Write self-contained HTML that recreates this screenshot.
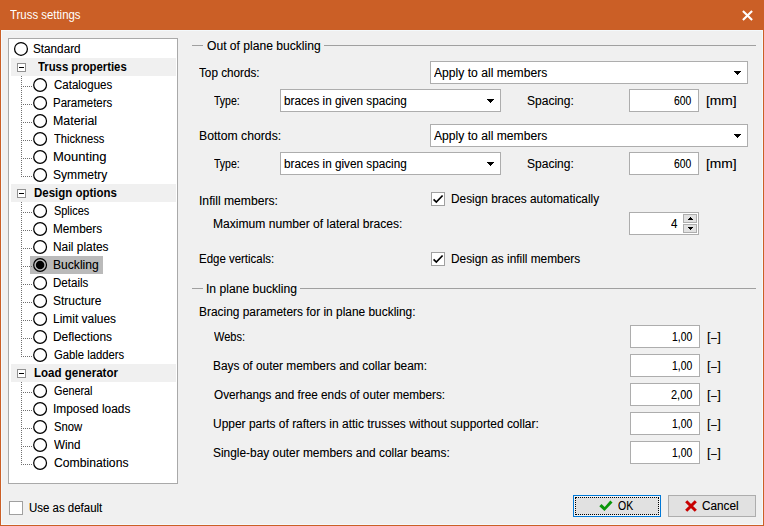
<!DOCTYPE html>
<html><head><meta charset="utf-8"><title>Truss settings</title>
<style>
html,body{margin:0;padding:0;}
body{width:764px;height:526px;overflow:hidden;background:#f0f0f0;font-family:"Liberation Sans",sans-serif;font-size:12px;color:#000;position:relative;}
.abs,.t,.box,.hl{position:absolute;}
.t{text-shadow:0 0 0 rgba(0,0,0,0.3);white-space:nowrap;line-height:16px;height:16px;transform-origin:0 0;}
.b{font-weight:bold;text-shadow:none;}
#title{left:0;top:0;width:764px;height:30px;background:#cb5f26;}
#bl{left:0;top:29px;width:1px;height:497px;background:#cb5f26;}
#br{left:763px;top:29px;width:1px;height:497px;background:#cb5f26;}
#bb{left:0;top:525px;width:764px;height:1px;background:#cb5f26;}
#bt{left:0;top:29px;width:764px;height:1px;background:#cb5f26;}
#inner{left:1px;top:30px;width:760px;height:493px;border:1px solid #f4f9fc;}
#tree{left:8px;top:38px;width:168px;height:444px;background:#fff;border:1px solid #a9a9a9;}
.box{background:#fff;border:1px solid #adadad;box-sizing:border-box;}
.hl{background:#a0a0a0;height:1px;}
svg{position:absolute;overflow:visible;}
</style></head><body>
<div class="abs" id="title"></div><div class="abs" id="bl"></div><div class="abs" id="br"></div><div class="abs" id="bb"></div><div class="abs" id="bt"></div><div class="abs" id="inner"></div>
<svg style="left:742px;top:10px" width="11" height="11" viewBox="0 0 11 11"><path d="M0.9 0.9 L10.1 10.1 M10.1 0.9 L0.9 10.1" stroke="#fff" stroke-width="2.1" fill="none"/></svg>
<div class="abs" id="tree"></div>

<svg style="left:13px;top:40px" width="16" height="16" viewBox="0 0 16 16"><circle cx="8.00" cy="8.90" r="6.4" fill="#fff" stroke="#000" stroke-width="1.25"/></svg>
<div class="abs" style="left:11px;top:58px;width:165px;height:18px;background:#f0f0f0"></div>
<svg style="left:17px;top:63px" width="9" height="9" viewBox="0 0 9 9"><rect x="0.5" y="0.5" width="8" height="8" fill="#fff" stroke="#919191"/><path d="M2 4.5H7" stroke="#000"/></svg>
<div class="abs" style="left:21px;top:76px;width:1px;height:18px;background:repeating-linear-gradient(to bottom,#707070 0 1px,transparent 1px 2px)"></div>
<div class="abs" style="left:22px;top:86px;width:11px;height:1px;background:repeating-linear-gradient(to right,transparent 0 1px,#707070 1px 2px)"></div>
<svg style="left:32px;top:77px" width="16" height="16" viewBox="0 0 16 16"><circle cx="8.10" cy="8.00" r="6.4" fill="#fff" stroke="#000" stroke-width="1.25"/></svg>
<div class="abs" style="left:21px;top:94px;width:1px;height:18px;background:repeating-linear-gradient(to bottom,#707070 0 1px,transparent 1px 2px)"></div>
<div class="abs" style="left:22px;top:104px;width:11px;height:1px;background:repeating-linear-gradient(to right,transparent 0 1px,#707070 1px 2px)"></div>
<svg style="left:32px;top:95px" width="16" height="16" viewBox="0 0 16 16"><circle cx="8.10" cy="8.00" r="6.4" fill="#fff" stroke="#000" stroke-width="1.25"/></svg>
<div class="abs" style="left:21px;top:112px;width:1px;height:18px;background:repeating-linear-gradient(to bottom,#707070 0 1px,transparent 1px 2px)"></div>
<div class="abs" style="left:22px;top:122px;width:11px;height:1px;background:repeating-linear-gradient(to right,transparent 0 1px,#707070 1px 2px)"></div>
<svg style="left:32px;top:113px" width="16" height="16" viewBox="0 0 16 16"><circle cx="8.10" cy="8.00" r="6.4" fill="#fff" stroke="#000" stroke-width="1.25"/></svg>
<div class="abs" style="left:21px;top:130px;width:1px;height:18px;background:repeating-linear-gradient(to bottom,#707070 0 1px,transparent 1px 2px)"></div>
<div class="abs" style="left:22px;top:140px;width:11px;height:1px;background:repeating-linear-gradient(to right,transparent 0 1px,#707070 1px 2px)"></div>
<svg style="left:32px;top:131px" width="16" height="16" viewBox="0 0 16 16"><circle cx="8.10" cy="8.00" r="6.4" fill="#fff" stroke="#000" stroke-width="1.25"/></svg>
<div class="abs" style="left:21px;top:148px;width:1px;height:18px;background:repeating-linear-gradient(to bottom,#707070 0 1px,transparent 1px 2px)"></div>
<div class="abs" style="left:22px;top:158px;width:11px;height:1px;background:repeating-linear-gradient(to right,transparent 0 1px,#707070 1px 2px)"></div>
<svg style="left:32px;top:149px" width="16" height="16" viewBox="0 0 16 16"><circle cx="8.10" cy="8.00" r="6.4" fill="#fff" stroke="#000" stroke-width="1.25"/></svg>
<div class="abs" style="left:21px;top:166px;width:1px;height:11px;background:repeating-linear-gradient(to bottom,#707070 0 1px,transparent 1px 2px)"></div>
<div class="abs" style="left:22px;top:176px;width:11px;height:1px;background:repeating-linear-gradient(to right,transparent 0 1px,#707070 1px 2px)"></div>
<svg style="left:32px;top:167px" width="16" height="16" viewBox="0 0 16 16"><circle cx="8.10" cy="8.00" r="6.4" fill="#fff" stroke="#000" stroke-width="1.25"/></svg>
<div class="abs" style="left:11px;top:184px;width:165px;height:18px;background:#f0f0f0"></div>
<svg style="left:17px;top:189px" width="9" height="9" viewBox="0 0 9 9"><rect x="0.5" y="0.5" width="8" height="8" fill="#fff" stroke="#919191"/><path d="M2 4.5H7" stroke="#000"/></svg>
<div class="abs" style="left:21px;top:202px;width:1px;height:18px;background:repeating-linear-gradient(to bottom,#707070 0 1px,transparent 1px 2px)"></div>
<div class="abs" style="left:22px;top:212px;width:11px;height:1px;background:repeating-linear-gradient(to right,transparent 0 1px,#707070 1px 2px)"></div>
<svg style="left:32px;top:203px" width="16" height="16" viewBox="0 0 16 16"><circle cx="8.10" cy="8.00" r="6.4" fill="#fff" stroke="#000" stroke-width="1.25"/></svg>
<div class="abs" style="left:21px;top:220px;width:1px;height:18px;background:repeating-linear-gradient(to bottom,#707070 0 1px,transparent 1px 2px)"></div>
<div class="abs" style="left:22px;top:230px;width:11px;height:1px;background:repeating-linear-gradient(to right,transparent 0 1px,#707070 1px 2px)"></div>
<svg style="left:32px;top:221px" width="16" height="16" viewBox="0 0 16 16"><circle cx="8.10" cy="8.00" r="6.4" fill="#fff" stroke="#000" stroke-width="1.25"/></svg>
<div class="abs" style="left:21px;top:238px;width:1px;height:18px;background:repeating-linear-gradient(to bottom,#707070 0 1px,transparent 1px 2px)"></div>
<div class="abs" style="left:22px;top:248px;width:11px;height:1px;background:repeating-linear-gradient(to right,transparent 0 1px,#707070 1px 2px)"></div>
<svg style="left:32px;top:239px" width="16" height="16" viewBox="0 0 16 16"><circle cx="8.10" cy="8.00" r="6.4" fill="#fff" stroke="#000" stroke-width="1.25"/></svg>
<div class="abs" style="left:30px;top:256px;width:73px;height:18px;background:#bababa"></div>
<div class="abs" style="left:21px;top:256px;width:1px;height:18px;background:repeating-linear-gradient(to bottom,#707070 0 1px,transparent 1px 2px)"></div>
<div class="abs" style="left:22px;top:266px;width:11px;height:1px;background:repeating-linear-gradient(to right,transparent 0 1px,#707070 1px 2px)"></div>
<svg style="left:32px;top:257px" width="16" height="16" viewBox="0 0 16 16"><circle cx="8.10" cy="8.00" r="6.4" fill="#bababa" stroke="#000" stroke-width="1.25"/><circle cx="8.10" cy="8.00" r="4.3" fill="#000"/></svg>
<div class="abs" style="left:21px;top:274px;width:1px;height:18px;background:repeating-linear-gradient(to bottom,#707070 0 1px,transparent 1px 2px)"></div>
<div class="abs" style="left:22px;top:284px;width:11px;height:1px;background:repeating-linear-gradient(to right,transparent 0 1px,#707070 1px 2px)"></div>
<svg style="left:32px;top:275px" width="16" height="16" viewBox="0 0 16 16"><circle cx="8.10" cy="8.00" r="6.4" fill="#fff" stroke="#000" stroke-width="1.25"/></svg>
<div class="abs" style="left:21px;top:292px;width:1px;height:18px;background:repeating-linear-gradient(to bottom,#707070 0 1px,transparent 1px 2px)"></div>
<div class="abs" style="left:22px;top:302px;width:11px;height:1px;background:repeating-linear-gradient(to right,transparent 0 1px,#707070 1px 2px)"></div>
<svg style="left:32px;top:293px" width="16" height="16" viewBox="0 0 16 16"><circle cx="8.10" cy="8.00" r="6.4" fill="#fff" stroke="#000" stroke-width="1.25"/></svg>
<div class="abs" style="left:21px;top:310px;width:1px;height:18px;background:repeating-linear-gradient(to bottom,#707070 0 1px,transparent 1px 2px)"></div>
<div class="abs" style="left:22px;top:320px;width:11px;height:1px;background:repeating-linear-gradient(to right,transparent 0 1px,#707070 1px 2px)"></div>
<svg style="left:32px;top:311px" width="16" height="16" viewBox="0 0 16 16"><circle cx="8.10" cy="8.00" r="6.4" fill="#fff" stroke="#000" stroke-width="1.25"/></svg>
<div class="abs" style="left:21px;top:328px;width:1px;height:18px;background:repeating-linear-gradient(to bottom,#707070 0 1px,transparent 1px 2px)"></div>
<div class="abs" style="left:22px;top:338px;width:11px;height:1px;background:repeating-linear-gradient(to right,transparent 0 1px,#707070 1px 2px)"></div>
<svg style="left:32px;top:329px" width="16" height="16" viewBox="0 0 16 16"><circle cx="8.10" cy="8.00" r="6.4" fill="#fff" stroke="#000" stroke-width="1.25"/></svg>
<div class="abs" style="left:21px;top:346px;width:1px;height:11px;background:repeating-linear-gradient(to bottom,#707070 0 1px,transparent 1px 2px)"></div>
<div class="abs" style="left:22px;top:356px;width:11px;height:1px;background:repeating-linear-gradient(to right,transparent 0 1px,#707070 1px 2px)"></div>
<svg style="left:32px;top:347px" width="16" height="16" viewBox="0 0 16 16"><circle cx="8.10" cy="8.00" r="6.4" fill="#fff" stroke="#000" stroke-width="1.25"/></svg>
<div class="abs" style="left:11px;top:364px;width:165px;height:18px;background:#f0f0f0"></div>
<svg style="left:17px;top:369px" width="9" height="9" viewBox="0 0 9 9"><rect x="0.5" y="0.5" width="8" height="8" fill="#fff" stroke="#919191"/><path d="M2 4.5H7" stroke="#000"/></svg>
<div class="abs" style="left:21px;top:382px;width:1px;height:18px;background:repeating-linear-gradient(to bottom,#707070 0 1px,transparent 1px 2px)"></div>
<div class="abs" style="left:22px;top:392px;width:11px;height:1px;background:repeating-linear-gradient(to right,transparent 0 1px,#707070 1px 2px)"></div>
<svg style="left:32px;top:383px" width="16" height="16" viewBox="0 0 16 16"><circle cx="8.10" cy="8.00" r="6.4" fill="#fff" stroke="#000" stroke-width="1.25"/></svg>
<div class="abs" style="left:21px;top:400px;width:1px;height:18px;background:repeating-linear-gradient(to bottom,#707070 0 1px,transparent 1px 2px)"></div>
<div class="abs" style="left:22px;top:410px;width:11px;height:1px;background:repeating-linear-gradient(to right,transparent 0 1px,#707070 1px 2px)"></div>
<svg style="left:32px;top:401px" width="16" height="16" viewBox="0 0 16 16"><circle cx="8.10" cy="8.00" r="6.4" fill="#fff" stroke="#000" stroke-width="1.25"/></svg>
<div class="abs" style="left:21px;top:418px;width:1px;height:18px;background:repeating-linear-gradient(to bottom,#707070 0 1px,transparent 1px 2px)"></div>
<div class="abs" style="left:22px;top:428px;width:11px;height:1px;background:repeating-linear-gradient(to right,transparent 0 1px,#707070 1px 2px)"></div>
<svg style="left:32px;top:419px" width="16" height="16" viewBox="0 0 16 16"><circle cx="8.10" cy="8.00" r="6.4" fill="#fff" stroke="#000" stroke-width="1.25"/></svg>
<div class="abs" style="left:21px;top:436px;width:1px;height:18px;background:repeating-linear-gradient(to bottom,#707070 0 1px,transparent 1px 2px)"></div>
<div class="abs" style="left:22px;top:446px;width:11px;height:1px;background:repeating-linear-gradient(to right,transparent 0 1px,#707070 1px 2px)"></div>
<svg style="left:32px;top:437px" width="16" height="16" viewBox="0 0 16 16"><circle cx="8.10" cy="8.00" r="6.4" fill="#fff" stroke="#000" stroke-width="1.25"/></svg>
<div class="abs" style="left:21px;top:454px;width:1px;height:11px;background:repeating-linear-gradient(to bottom,#707070 0 1px,transparent 1px 2px)"></div>
<div class="abs" style="left:22px;top:464px;width:11px;height:1px;background:repeating-linear-gradient(to right,transparent 0 1px,#707070 1px 2px)"></div>
<svg style="left:32px;top:455px" width="16" height="16" viewBox="0 0 16 16"><circle cx="8.10" cy="8.00" r="6.4" fill="#fff" stroke="#000" stroke-width="1.25"/></svg>
<div class="box" style="left:9px;top:501px;width:14px;height:14px;border-color:#a0a0a0"></div>
<div class="hl" style="left:192px;top:45px;width:11px"></div>
<div class="hl" style="left:324px;top:45px;width:432px"></div>
<div class="hl" style="left:192px;top:288px;width:11px"></div>
<div class="hl" style="left:300px;top:288px;width:456px"></div>
<div class="box" style="left:430px;top:61px;width:318px;height:23px"></div>
<svg style="left:734px;top:71px" width="7" height="4" viewBox="0 0 7 4"><path d="M0 0h7v1h-7zM1 1h5v1h-5zM2 2h3v1h-3zM3 3h1v1h-1z" fill="#000" shape-rendering="crispEdges"/></svg>
<div class="box" style="left:280px;top:89px;width:221px;height:23px"></div>
<svg style="left:487px;top:99px" width="7" height="4" viewBox="0 0 7 4"><path d="M0 0h7v1h-7zM1 1h5v1h-5zM2 2h3v1h-3zM3 3h1v1h-1z" fill="#000" shape-rendering="crispEdges"/></svg>
<div class="box" style="left:629px;top:89px;width:70px;height:23px"></div>
<div class="box" style="left:430px;top:124px;width:318px;height:23px"></div>
<svg style="left:734px;top:134px" width="7" height="4" viewBox="0 0 7 4"><path d="M0 0h7v1h-7zM1 1h5v1h-5zM2 2h3v1h-3zM3 3h1v1h-1z" fill="#000" shape-rendering="crispEdges"/></svg>
<div class="box" style="left:280px;top:152px;width:221px;height:23px"></div>
<svg style="left:487px;top:162px" width="7" height="4" viewBox="0 0 7 4"><path d="M0 0h7v1h-7zM1 1h5v1h-5zM2 2h3v1h-3zM3 3h1v1h-1z" fill="#000" shape-rendering="crispEdges"/></svg>
<div class="box" style="left:629px;top:152px;width:70px;height:23px"></div>
<div class="box" style="left:431px;top:192px;width:14px;height:14px;border-color:#a0a0a0"></div>
<svg style="left:431px;top:192px" width="14" height="14" viewBox="0 0 14 14"><path d="M2.6 7.4L5.3 10.1L11.6 3.5" stroke="#000" stroke-width="1.7" fill="none"/></svg>
<div class="box" style="left:629px;top:212px;width:70px;height:23px"></div>
<div class="box" style="left:683px;top:214px;width:14px;height:9px;background:#e1e1e1"></div><div class="box" style="left:683px;top:224px;width:14px;height:9px;background:#e1e1e1"></div>
<svg style="left:688px;top:217px" width="5" height="3" viewBox="0 0 5 3" shape-rendering="crispEdges"><path d="M2 0h1v1h-1zM1 1h3v1h-3zM0 2h5v1h-5z" fill="#000"/></svg>
<svg style="left:688px;top:227px" width="5" height="3" viewBox="0 0 5 3" shape-rendering="crispEdges"><path d="M0 0h5v1h-5zM1 1h3v1h-3zM2 2h1v1h-1z" fill="#000"/></svg>
<div class="box" style="left:431px;top:252px;width:14px;height:14px;border-color:#a0a0a0"></div>
<svg style="left:431px;top:252px" width="14" height="14" viewBox="0 0 14 14"><path d="M2.6 7.4L5.3 10.1L11.6 3.5" stroke="#000" stroke-width="1.7" fill="none"/></svg>
<div class="box" style="left:630px;top:325px;width:70px;height:23px"></div>
<div class="box" style="left:630px;top:354px;width:70px;height:23px"></div>
<div class="box" style="left:630px;top:383px;width:70px;height:23px"></div>
<div class="box" style="left:630px;top:412px;width:70px;height:23px"></div>
<div class="box" style="left:630px;top:441px;width:70px;height:23px"></div>
<div class="abs" style="left:573px;top:495px;width:88px;height:22px;box-sizing:border-box;background:#e1e1e1;border:1px solid #0078d7;"></div>
<div class="abs" style="left:574px;top:496px;width:86px;height:20px;box-sizing:border-box;border:1px solid #f4f4f4;"></div>
<div class="abs" style="left:575px;top:497px;width:84px;height:18px;box-sizing:border-box;border:1px dotted #000;background:transparent"></div>
<svg style="left:599px;top:500px" width="14" height="12" viewBox="0 0 14 12"><path d="M0.3 6.35L2.5 3.9L5.7 7.1L11.3 0.6L13.55 2.4L5.5 11Z" fill="#0a960a"/></svg>
<div class="box" style="left:668px;top:495px;width:88px;height:22px;background:#e1e1e1"></div>
<svg style="left:685px;top:500px" width="12" height="12" viewBox="0 0 12 12"><path d="M1.2 1.2L10.8 10.8M10.8 1.2L1.2 10.8" stroke="#c80000" stroke-width="3" fill="none"/></svg>
<span class="t" style="left:10.00px;top:7px;transform:scaleX(0.9501);color:#fff;text-shadow:none;">Truss settings</span>
<span class="t" style="left:33.42px;top:41px;transform:scaleX(0.9766);">Standard</span>
<span class="t b" style="left:37.60px;top:59px;transform:scaleX(0.9431);">Truss properties</span>
<span class="t" style="left:53.71px;top:77px;transform:scaleX(0.9585);">Catalogues</span>
<span class="t" style="left:52.54px;top:95px;transform:scaleX(0.9557);">Parameters</span>
<span class="t" style="left:53.07px;top:113px;transform:scaleX(1.0317);">Material</span>
<span class="t" style="left:53.50px;top:131px;transform:scaleX(0.9315);">Thickness</span>
<span class="t" style="left:53.02px;top:149px;transform:scaleX(1.0833);">Mounting</span>
<span class="t" style="left:53.09px;top:167px;transform:scaleX(1.0057);">Symmetry</span>
<span class="t b" style="left:33.64px;top:185px;transform:scaleX(0.9565);">Design options</span>
<span class="t" style="left:53.74px;top:203px;transform:scaleX(0.9103);">Splices</span>
<span class="t" style="left:52.51px;top:221px;transform:scaleX(0.9817);">Members</span>
<span class="t" style="left:52.51px;top:239px;transform:scaleX(0.9909);">Nail plates</span>
<span class="t" style="left:53.08px;top:257px;transform:scaleX(1.0091);">Buckling</span>
<span class="t" style="left:52.52px;top:275px;transform:scaleX(0.9632);">Details</span>
<span class="t" style="left:53.09px;top:293px;transform:scaleX(0.9959);">Structure</span>
<span class="t" style="left:52.50px;top:311px;transform:scaleX(0.9953);">Limit values</span>
<span class="t" style="left:53.09px;top:329px;transform:scaleX(0.9950);">Deflections</span>
<span class="t" style="left:53.74px;top:347px;transform:scaleX(0.9390);">Gable ladders</span>
<span class="t b" style="left:33.62px;top:365px;transform:scaleX(0.9617);">Load generator</span>
<span class="t" style="left:53.76px;top:383px;transform:scaleX(0.9015);">General</span>
<span class="t" style="left:52.51px;top:401px;transform:scaleX(0.9909);">Imposed loads</span>
<span class="t" style="left:53.72px;top:419px;transform:scaleX(0.9401);">Snow</span>
<span class="t" style="left:53.50px;top:437px;transform:scaleX(0.9705);">Wind</span>
<span class="t" style="left:53.67px;top:455px;transform:scaleX(1.0155);">Combinations</span>
<span class="t" style="left:28.64px;top:500px;transform:scaleX(0.9553);">Use as default</span>
<span class="t" style="left:206.88px;top:38px;transform:scaleX(1.0083);">Out of plane buckling</span>
<span class="t" style="left:205.98px;top:281px;transform:scaleX(1.0103);">In plane buckling</span>
<span class="t" style="left:199.00px;top:65px;transform:scaleX(0.9772);">Top chords:</span>
<span class="t" style="left:433.90px;top:65px;transform:scaleX(1.0107);">Apply to all members</span>
<span class="t" style="left:214.10px;top:93px;transform:scaleX(0.8757);">Type:</span>
<span class="t" style="left:283.52px;top:93px;transform:scaleX(0.9790);">braces in given spacing</span>
<span class="t" style="left:527.41px;top:93px;transform:scaleX(1.0024);">Spacing:</span>
<span class="t" style="left:673.78px;top:93px;transform:scaleX(0.8607);">600</span>
<span class="t" style="left:705.55px;top:93px;transform:scaleX(1.1520);">[mm]</span>
<span class="t" style="left:198.68px;top:128px;transform:scaleX(1.0177);">Bottom chords:</span>
<span class="t" style="left:433.90px;top:128px;transform:scaleX(1.0107);">Apply to all members</span>
<span class="t" style="left:214.10px;top:156px;transform:scaleX(0.8757);">Type:</span>
<span class="t" style="left:283.52px;top:156px;transform:scaleX(0.9790);">braces in given spacing</span>
<span class="t" style="left:527.41px;top:156px;transform:scaleX(1.0024);">Spacing:</span>
<span class="t" style="left:673.78px;top:156px;transform:scaleX(0.8607);">600</span>
<span class="t" style="left:705.55px;top:156px;transform:scaleX(1.1520);">[mm]</span>
<span class="t" style="left:198.68px;top:193px;transform:scaleX(1.0119);">Infill members:</span>
<span class="t" style="left:450.61px;top:191px;transform:scaleX(0.9866);">Design braces automatically</span>
<span class="t" style="left:213.09px;top:216px;transform:scaleX(1.0075);">Maximum number of lateral braces:</span>
<span class="t" style="left:670.80px;top:216px;transform:scaleX(0.9600);">4</span>
<span class="t" style="left:198.75px;top:251px;transform:scaleX(0.9545);">Edge verticals:</span>
<span class="t" style="left:450.60px;top:251px;transform:scaleX(0.9876);">Design as infill members</span>
<span class="t" style="left:199.30px;top:304px;transform:scaleX(0.9926);">Bracing parameters for in plane buckling:</span>
<span class="t" style="left:213.60px;top:329px;transform:scaleX(0.9182);">Webs:</span>
<span class="t" style="left:671.59px;top:329px;transform:scaleX(0.8622);">1,00</span>
<span class="t" style="left:706.92px;top:329px;transform:scaleX(1.0805);">[<span style="display:inline-block;transform:scaleX(0.8) translateY(0.5px);margin:0 -0.3px">–</span>]</span>
<span class="t" style="left:212.61px;top:358px;transform:scaleX(0.9902);">Bays of outer members and collar beam:</span>
<span class="t" style="left:671.59px;top:358px;transform:scaleX(0.8622);">1,00</span>
<span class="t" style="left:706.92px;top:358px;transform:scaleX(1.0805);">[<span style="display:inline-block;transform:scaleX(0.8) translateY(0.5px);margin:0 -0.3px">–</span>]</span>
<span class="t" style="left:213.81px;top:387px;transform:scaleX(0.9787);">Overhangs and free ends of outer members:</span>
<span class="t" style="left:671.04px;top:387px;transform:scaleX(0.9118);">2,00</span>
<span class="t" style="left:706.92px;top:387px;transform:scaleX(1.0805);">[<span style="display:inline-block;transform:scaleX(0.8) translateY(0.5px);margin:0 -0.3px">–</span>]</span>
<span class="t" style="left:212.60px;top:416px;transform:scaleX(0.9969);">Upper parts of rafters in attic trusses without supported collar:</span>
<span class="t" style="left:671.59px;top:416px;transform:scaleX(0.8622);">1,00</span>
<span class="t" style="left:706.92px;top:416px;transform:scaleX(1.0805);">[<span style="display:inline-block;transform:scaleX(0.8) translateY(0.5px);margin:0 -0.3px">–</span>]</span>
<span class="t" style="left:212.61px;top:445px;transform:scaleX(0.9916);">Single-bay outer members and collar beams:</span>
<span class="t" style="left:671.59px;top:445px;transform:scaleX(0.8622);">1,00</span>
<span class="t" style="left:706.92px;top:445px;transform:scaleX(1.0805);">[<span style="display:inline-block;transform:scaleX(0.8) translateY(0.5px);margin:0 -0.3px">–</span>]</span>
<span class="t" style="left:617.83px;top:498px;transform:scaleX(0.8722);">OK</span>
<span class="t" style="left:702.02px;top:498px;transform:scaleX(0.9806);">Cancel</span>
</body></html>
